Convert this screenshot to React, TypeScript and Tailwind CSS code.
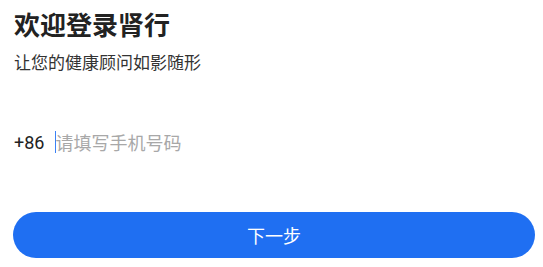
import React from 'react';

export default function App() {
  return (
    <div
      className="w-[543px] h-[267px] bg-white overflow-hidden"
      style={{ fontFamily: '"Noto Sans CJK SC", "Noto Sans", sans-serif' }}
    >
      <div className="pl-[14px] pt-[6px]">
        <h1 className="text-[26px] leading-[36px] font-bold text-[#222222]">欢迎登录肾行</h1>
        <p className="mt-[8px] text-[17px] leading-[24px] text-[#333333]">让您的健康顾问如影随形</p>
      </div>

      {/* Phone input */}
      <div className="mt-[56px] pl-[14px] flex items-center h-[24px]">
        <span className="text-[18px] text-[#222222] font-[Roboto,sans-serif]">+86</span>
        <div className="ml-[11px] w-px h-[22px] bg-[#3b82f6]"></div>
        <span className="-ml-px text-[18px] text-[#a8a8a8]">请填写手机号码</span>
      </div>

      <div className="mt-[58px] ml-[13px] w-[522px]">
        <button className="w-full h-[46px] rounded-full bg-[#1f6ff2] text-white text-[18px]">
          下一步
        </button>
      </div>
    </div>
  );
}
